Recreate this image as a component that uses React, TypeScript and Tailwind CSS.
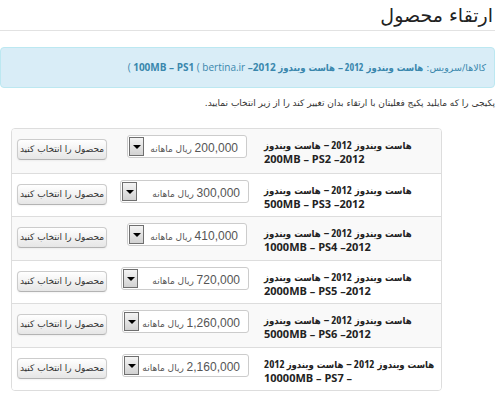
import React from 'react';

const rows = [
  { price: '200,000', size: '200MB', ps: 'PS2', sel: 'w-[120px] mr-[7px]' },
  { price: '300,000', size: '500MB', ps: 'PS3', sel: 'w-[129px] mr-[5px]' },
  { price: '410,000', size: '1000MB', ps: 'PS4', sel: 'w-[120px] mr-[7px]' },
  { price: '720,000', size: '2000MB', ps: 'PS5', sel: 'w-[128px] mr-[5px]' },
  { price: '1,260,000', size: '5000MB', ps: 'PS6', sel: 'w-[127px] mr-[5px]' },
  { price: '2,160,000', size: '10000MB', ps: 'PS7', sel: 'w-[127px] mr-[5px]' },
];

const latin = "font-['Open_Sans','DejaVu_Sans',sans-serif]";
const narrow = "font-['DejaVu_Sans_Condensed','DejaVu_Sans',sans-serif] [font-stretch:condensed]";

function FakeSelect({ price, cls }: { price: string; cls: string }) {
  return (
    <div className={`flex h-[23px] items-center justify-between rounded-[3px] border border-[#cccccc] bg-white ${cls}`}>
      <span className="pr-[8px] text-[#555]">
        <span className="font-['Liberation_Sans',sans-serif] text-[12px]">{price}</span>
        <span className="text-[9px]"> ریال ماهانه</span>
      </span>
      <span className="ml-[1px] flex h-[19px] w-[15px] items-center justify-center border border-[#6f6f6f] bg-gradient-to-b from-[#f4f4f4] to-[#d2d2d2]">
        <span className="h-0 w-0 border-x-[4px] border-t-[4px] border-x-transparent border-t-black" />
      </span>
    </div>
  );
}

export default function App() {
  return (
    <div dir="rtl" className="h-[395px] w-[500px] overflow-hidden bg-white pr-[5px] font-['DejaVu_Sans',sans-serif] text-[#333]">
      <div className="h-[31px] border-b border-[#e2e2e2]">
        <h1 className="pr-[2px] text-[19px] leading-[30px] text-[#222]">ارتقاء محصول</h1>
      </div>

      <div className="mt-[16px] flex h-[41px] items-center rounded-[4px] border border-[#bce8f1] bg-[#d9edf7] pr-[8px] text-[9.5px] text-[#3a87ad]">
        <span dir="ltr" className="whitespace-nowrap">
          <span className={`${latin} text-[10px]`}>( </span>
          <b className={`${latin} text-[10px]`}>100MB – PS1</b>
          <span className={`${latin} text-[10px]`}> ( bertina.ir </span>
          <b>
            <span className={`${latin} text-[10px]`}>–2012 </span>
            <bdi dir="rtl" className={narrow}>
              هاست ویندوز <span className={`${latin} text-[10px]`}>2012 –</span> هاست ویندوز
            </bdi>
          </b>{' '}
          <bdi dir="rtl">کالاها/سرویس:</bdi>
        </span>
      </div>

      <p className="mt-[8px] text-[9px] leading-[14px]">
        پکیجی را که مایلید پکیج فعلیتان با ارتقاء بدان تغییر کند را از زیر انتخاب نمایید.
      </p>

      <div className="mr-[53px] mt-[18px] w-[431px] overflow-hidden rounded-[4px] border border-[#dddddd]">
        {rows.map((r, i) => (
          <div
            key={r.ps}
            className={`grid grid-cols-[187px_140px_104px] ${i % 2 === 0 ? 'h-[44px] bg-[#f9f9f9]' : 'h-[43px] bg-white'} ${i > 0 ? 'border-t border-[#dddddd]' : ''}`}
          >
            <div className="pl-[10px] pt-[9px] text-left font-bold leading-[13px] text-[#222]">
              <div className={`whitespace-nowrap text-[9.5px] ${narrow}`}>
                هاست ویندوز <span className={`${latin} text-[11px]`}>2012 –</span> هاست ویندوز
                {i === 5 && <span className={`${latin} text-[11px]`}> 2012</span>}
              </div>
              <div className={`${latin} whitespace-nowrap text-[11px]`}>
                {i === 5 ? `– ${r.size} – ${r.ps}` : `2012– ${r.size} – ${r.ps}`}
              </div>
            </div>
            <div className="flex items-start pt-[6px]">
              <FakeSelect price={r.price} cls={r.sel} />
            </div>
            <div className="flex items-start justify-end pl-[7px] pt-[10px]">
              <button className="h-[21px] w-[90px] rounded-[4px] border border-[#cccccc] border-b-[#b3b3b3] bg-gradient-to-b from-white to-[#e6e6e6] text-[9px] text-[#333] shadow-[0_1px_2px_rgba(0,0,0,0.05)]">
                محصول را انتخاب کنید
              </button>
            </div>
          </div>
        ))}
      </div>
    </div>
  );
}
